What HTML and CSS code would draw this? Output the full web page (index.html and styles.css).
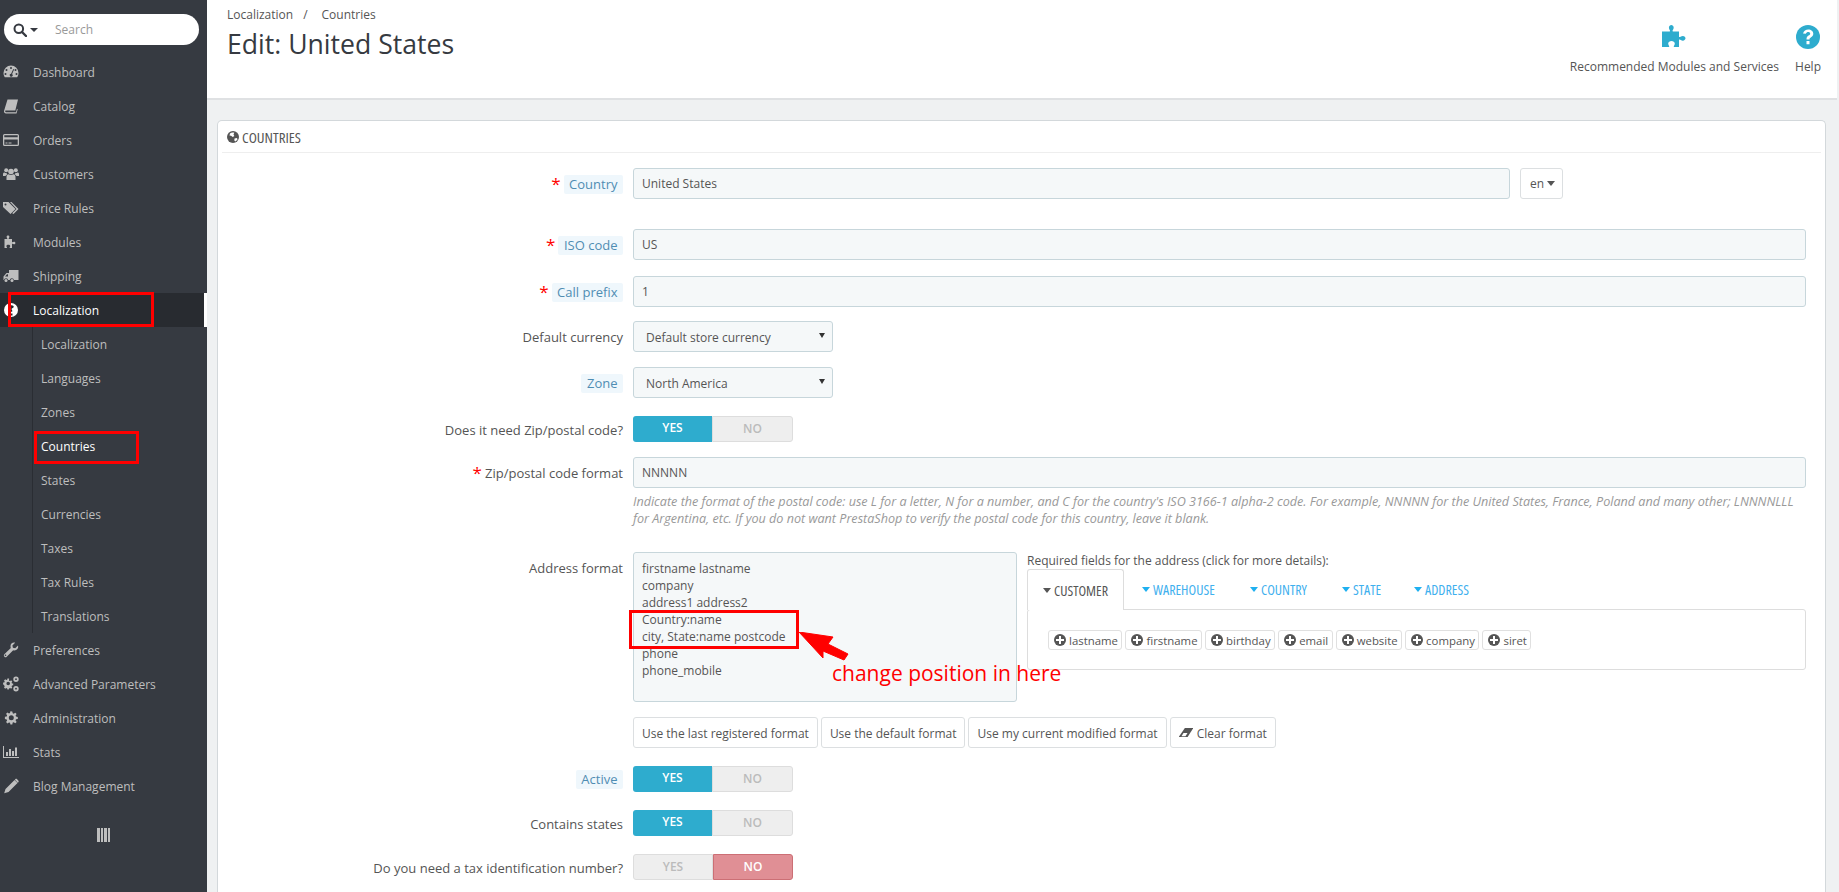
FILE: index.html
```html
<!DOCTYPE html>
<html lang="en">
<head>
<meta charset="utf-8">
<title>Edit: United States</title>
<link rel="stylesheet" href="styles.css">
</head>
<body>
<div class="shell">
  <aside class="sidebar">
    <div class="search">
      <svg class="s-ic" viewBox="0 0 14 14"><circle cx="5.8" cy="5.8" r="4.3" fill="none" stroke="#363a41" stroke-width="2"/><path d="M9 9l4 4" stroke="#363a41" stroke-width="2.4" stroke-linecap="round"/></svg>
      <svg class="s-caret" viewBox="0 0 8 4"><path d="M0 0h8L4 4z" fill="#363a41"/></svg>
      <span class="s-text">Search</span>
    </div>
    <nav class="nav">
      <a class="nav-item"><svg class="ic" viewBox="0 0 16 16"><path fill-rule="evenodd" d="M8 1.5A7.5 7.5 0 0 0 .5 9c0 1.6.5 3 1.3 4.3h12.4c.8-1.3 1.3-2.700 1.300-4.300A7.500 7.500 0 0 0 8 1.500zM8 3a1 1 0 1 1 0 2 1 1 0 0 1 0-2zM3.500 5a1 1 0 1 1 0 2 1 1 0 0 1 0-2zM12.500 5a1 1 0 1 1 0 2 1 1 0 0 1 0-2zM2.500 9a1 1 0 1 1 0 2 1 1 0 0 1 0-2zM13.500 9a1 1 0 1 1 0 2 1 1 0 0 1 0-2zM10.300 5l.8.400-2 4.600a1.500 1.500 0 1 1-1-.300z"/></svg><span>Dashboard</span></a>
      <a class="nav-item"><svg class="ic" viewBox="0 0 16 16"><path d="M4.500 1.500h10.500L12.300 12.500H3c-.8 0-.9.500-.8 1 .1.400.4.700 1 .700h9.800l1-3.500.7.500-1.200 4.300H3C1.700 15.500.8 14.500 1 13z"/></svg><span>Catalog</span></a>
      <a class="nav-item"><svg class="ic" viewBox="0 0 16 16"><path fill-rule="evenodd" d="M1.500 2h13A1.500 1.500 0 0 1 16 3.500v9a1.500 1.500 0 0 1-1.500 1.500h-13A1.500 1.500 0 0 1 0 12.500v-9A1.500 1.500 0 0 1 1.500 2zM1.300 3.300v1.900h13.400V3.300zM1.300 7.500v5.200h13.400V7.500zM2.500 10.500h2v1h-2zM5.500 10.500h3v1h-3z"/></svg><span>Orders</span></a>
      <a class="nav-item"><svg class="ic" viewBox="0 0 16 16"><circle cx="8" cy="5.500" r="2.800"/><circle cx="3.200" cy="4.300" r="2"/><circle cx="12.800" cy="4.300" r="2"/><path d="M3.500 14v-3c0-1.700 1-2.700 2.300-2.700.6.500 1.300.8 2.200.8s1.600-.3 2.200-.8c1.300 0 2.300 1 2.300 2.700v3zM0 10V8c0-1 .6-1.600 1.500-1.600.6.400 1.100.6 2 .6.100.6.500 1.200.9 1.600C3.300 9 2.800 9.500 2.600 10zM16 10V8c0-1-.6-1.600-1.500-1.600-.6.400-1.100.6-2 .6-.1.600-.5 1.200-.9 1.600 1.100.4 1.600.9 1.800 1.400z"/></svg><span>Customers</span></a>
      <a class="nav-item"><svg class="ic" viewBox="0 0 16 16"><path fill-rule="evenodd" d="M0 2h5.500l7 7-5 5-7.500-7zM2.500 3.500a1 1 0 1 0 0 2 1 1 0 0 0 0-2z"/><path d="M7 2h1.500l7 7-5 5-1.300-.8 4.300-4.200z"/></svg><span>Price Rules</span></a>
      <a class="nav-item"><svg class="ic" viewBox="0 0 16 16"><path d="M1.500 5H4.200c.5-.5-.6-1.200-.6-2.200C3.600 1.900 4.400 1.500 5 1.500s1.400.4 1.400 1.300c0 1-1.100 1.700-.6 2.200H9v3.200c.5.500 1.200-.5 2-.5 1 0 1.400.7 1.400 1.300s-.4 1.300-1.400 1.300c-.8 0-1.500-1-2-.5V14H6.700c-.500-.5.500-1 .5-1.800 0-.9-.9-1.400-1.900-1.400s-1.900.5-1.900 1.400c0 .8 1 1.300.5 1.800H1.500z"/></svg><span>Modules</span></a>
      <a class="nav-item"><svg class="ic" viewBox="0 0 16 16"><path fill-rule="evenodd" d="M6 2h9.500v10H11a2.200 2.200 0 0 0-4.300 0H5.200a2.200 2.200 0 0 0-4.300 0H.5V8.500L3.500 5H6zM4 6.200L2 8.500h3V6.200z"/><circle cx="3" cy="12.500" r="1.500"/><circle cx="9" cy="12.500" r="1.500"/></svg><span>Shipping</span></a>
      <a class="nav-item nav-active"><svg class="ic" viewBox="0 0 16 16"><circle cx="8" cy="8" r="7"/><path d="M5.500 4.500c1-1.500 4-1.800 5-.5.700 1-.3 2-1.300 2.300-.7.300-.7 1-.3 1.700l.4.700c.3.500-.2 1-.9 1H7.300c-.9 0-1-.9-.6-1.500.2-.5 0-1-.5-1.500C5.500 6.500 5 5.500 5.500 4.500zM7 11.500h2.500v2H7z" fill="#282b30"/></svg><span>Localization</span></a>
      <div class="sub">
        <a class="sub-item">Localization</a>
        <a class="sub-item">Languages</a>
        <a class="sub-item">Zones</a>
        <a class="sub-item sub-active">Countries</a>
        <a class="sub-item">States</a>
        <a class="sub-item">Currencies</a>
        <a class="sub-item">Taxes</a>
        <a class="sub-item">Tax Rules</a>
        <a class="sub-item">Translations</a>
      </div>
      <a class="nav-item"><svg class="ic" viewBox="0 0 16 16"><path fill-rule="evenodd" d="M15 3.500l-2.800 2.700-2.300-.5-.5-2.300L12.100.700C9.800 0 7.300 1.700 7.500 4.500c0 .5.100 1 .3 1.400L1.300 12.300a1.700 1.700 0 0 0 2.400 2.400l6.500-6.500c2.900.9 5.700-1.500 4.800-4.700zM2.500 12.500a.8.800 0 1 1 0 1.600.8.800 0 0 1 0-1.600z"/></svg><span>Preferences</span></a>
      <a class="nav-item"><svg class="ic" viewBox="0 0 16 16"><path fill-rule="evenodd" d="M5.500 3.500l1.200.3.900-.7 1.200 1.200-.7.900.4 1 1.200.2v1.700l-1.200.2-.4 1 .7 1-1.200 1.200-.9-.7-1.200.4-.2 1.200H3.900l-.2-1.200-1-.4-1 .7-1.200-1.200.7-1-.4-1L-.4 7.100V5.400l1.200-.2.400-1-.7-.9 1.200-1.200 1 .7 1-.3.200-1.200h1.700zM4.700 4.500a1.800 1.800 0 1 0 0 3.600 1.800 1.800 0 0 0 0-3.600z" transform="translate(.5 1.200)"/><path fill-rule="evenodd" d="M13 .5a2.700 2.700 0 1 0 0 5.400 2.700 2.700 0 0 0 0-5.400zM13 2.300a.9.900 0 1 1 0 1.800.9.900 0 0 1 0-1.800zM13 10a2.700 2.700 0 1 0 0 5.400 2.700 2.700 0 0 0 0-5.400zM13 11.800a.9.900 0 1 1 0 1.800.9.900 0 0 1 0-1.800z"/></svg><span>Advanced Parameters</span></a>
      <a class="nav-item"><svg class="ic" viewBox="0 0 16 16"><path fill-rule="evenodd" d="M9.300 1.500l.4 1.800 1 .4 1.600-1 1.300 1.300-1 1.600.4 1 1.800.4v1.900l-1.800.4-.4 1 1 1.600-1.300 1.300-1.600-1-1 .4-.4 1.800H7.400L7 12.800l-1-.4-1.600 1-1.300-1.300 1-1.600-.4-1-1.800-.4V6.800l1.800-.4.400-1-1-1.600 1.300-1.300 1.600 1 1-.4.400-1.800zM8.300 5.200a2.500 2.500 0 1 0 0 5 2.500 2.500 0 0 0 0-5z"/></svg><span>Administration</span></a>
      <a class="nav-item"><svg class="ic" viewBox="0 0 16 16"><path d="M0 2h1v11h15v1H0zM3 8h2v4H3zM6 5h2v7H6zM9 7h2v5H9zM12 3.500h2V12h-2z"/></svg><span>Stats</span></a>
      <a class="nav-item"><svg class="ic" viewBox="0 0 16 16"><path d="M11.500 2l3 3-9 9-4.300 1.300L2.500 11zM12.300 1.200c.5-.5 1.300-.5 1.800 0l1.200 1.200c.5.500.5 1.300 0 1.800l-.5.500-3-3z"/></svg><span>Blog Management</span></a>
    </nav>
    <div class="collapse"><i></i><i></i><i></i><i></i></div>
  </aside>
  <main class="main">
    <header class="top">
      <div class="head-left">
        <div class="crumbs"><span>Localization</span><span class="slash">/</span><span>Countries</span></div>
        <h1 class="title">Edit: United States</h1>
      </div>
      <div class="head-right">
        <a class="tool tool-rec"><svg class="t-puzzle" viewBox="0 0 27 25"><path fill="#2eacce" d="M1 8.500h7.800c1-.8-.9-2-.9-3.800C7.900 3 9.200 2 10.300 2s2.400 1 2.400 2.700c0 1.800-1.900 3-.9 3.800H18v5.300c.8 1 2-.9 3.800-.9 1.700 0 2.700 1.300 2.700 2.400s-1 2.400-2.700 2.400c-1.800 0-3-1.900-3.800-.9V24h-5c-1-.9.800-1.500.8-3.200 0-1.600-1.600-2.700-3.300-2.700s-3.300 1.100-3.300 2.700c0 1.700 1.800 2.300.8 3.200H1z"/></svg><span>Recommended Modules and Services</span></a>
        <a class="tool tool-help"><svg class="t-help" viewBox="0 0 24 24"><circle cx="12" cy="12" r="12" fill="#2eacce"/><path fill="#fff" d="M7 8.500C7.800 5.800 9.800 4.500 12.300 4.500c2.800 0 5 1.800 5 4.300 0 2-1.200 2.900-2.500 3.700-1 .6-1.300 1-1.300 2h-3c0-2 .6-3 2-3.900 1-.6 1.700-1 1.700-1.900 0-1-.9-1.600-1.900-1.600-1.200 0-1.900.7-2.500 1.700zM10.500 16h3v3.200h-3z"/></svg><span>Help</span></a>
      </div>
    </header>
    <section class="panel">
      <div class="panel-head"><svg class="p-globe" viewBox="0 0 12 12"><circle cx="6" cy="6" r="6" fill="#555"/><path fill="#fff" d="M3 2.500c1-1 3-1.300 4.300-.7L6.500 3.500l.8 1.500-1.500 1L4 4.800 2.500 4.500zM7.500 7.500l2.500-.5.500 1.500-2 2-1.200-1z"/></svg><span class="cond">COUNTRIES</span></div>
      <form class="form">
        <div class="row row-first">
          <div class="lab"><b class="star">*</b><span class="chip">Country</span></div>
          <div class="ctl ctl-line"><div class="input input-grow">United States</div><div class="lang">en<i class="caret"></i></div></div>
        </div>
        <div class="row row-iso">
          <div class="lab"><b class="star">*</b><span class="chip">ISO code</span></div>
          <div class="ctl"><div class="input">US</div></div>
        </div>
        <div class="row row-prefix">
          <div class="lab"><b class="star">*</b><span class="chip">Call prefix</span></div>
          <div class="ctl"><div class="input">1</div></div>
        </div>
        <div class="row row-tight">
          <div class="lab">Default currency</div>
          <div class="ctl"><div class="select">Default store currency<i class="sel-caret"></i></div></div>
        </div>
        <div class="row">
          <div class="lab"><span class="chip">Zone</span></div>
          <div class="ctl"><div class="select">North America<i class="sel-caret"></i></div></div>
        </div>
        <div class="row row-sw">
          <div class="lab lab-sw">Does it need Zip/postal code?</div>
          <div class="ctl"><div class="switch"><span class="on">YES</span><span class="off">NO</span></div></div>
        </div>
        <div class="row">
          <div class="lab"><b class="star">*</b>Zip/postal code format</div>
          <div class="ctl"><div class="input">NNNNN</div>
            <p class="help">Indicate the format of the postal code: use L for a letter, N for a number, and C for the country's ISO 3166-1 alpha-2 code. For example, NNNNN for the United States, France, Poland and many other; LNNNNLLL for Argentina, etc. If you do not want PrestaShop to verify the postal code for this country, leave it blank.</p>
          </div>
        </div>
        <div class="row row-addr">
          <div class="lab lab-top">Address format</div>
          <div class="ctl ctl-addr">
            <div class="textarea">firstname lastname<br>company<br>address1 address2<br>Country:name<br>city, State:name postcode<br>phone<br>phone_mobile</div>
            <div class="fields">
              <div class="fields-title">Required fields for the address (click for more details):</div>
              <div class="tabs">
                <div class="tab tab-active"><i class="caret caret-dark"></i><span>CUSTOMER</span></div>
                <div class="tab tab-wh"><i class="caret"></i><span>WAREHOUSE</span></div>
                <div class="tab tab-co"><i class="caret"></i><span>COUNTRY</span></div>
                <div class="tab tab-st"><i class="caret"></i><span>STATE</span></div>
                <div class="tab tab-ad"><i class="caret"></i><span>ADDRESS</span></div>
              </div>
              <div class="tab-body">
                <span class="tag"><i class="plus"></i>lastname</span>
                <span class="tag"><i class="plus"></i>firstname</span>
                <span class="tag"><i class="plus"></i>birthday</span>
                <span class="tag"><i class="plus"></i>email</span>
                <span class="tag"><i class="plus"></i>website</span>
                <span class="tag"><i class="plus"></i>company</span>
                <span class="tag"><i class="plus"></i>siret</span>
              </div>
            </div>
          </div>
        </div>
        <div class="row">
          <div class="lab"></div>
          <div class="ctl ctl-btns">
            <span class="btn">Use the last registered format</span>
            <span class="btn">Use the default format</span>
            <span class="btn">Use my current modified format</span>
            <span class="btn"><svg class="eraser" viewBox="0 0 14 12"><path fill="#555" d="M5 1h8.500l-4.500 9H0z" transform="skewX(-8) translate(1 0)"/><path fill="#fff" d="M2.500 9.300L4.500 6h4L6.500 9.300z"/></svg>Clear format</span>
          </div>
        </div>
        <div class="row row-sw">
          <div class="lab lab-sw"><span class="chip">Active</span></div>
          <div class="ctl"><div class="switch"><span class="on">YES</span><span class="off">NO</span></div></div>
        </div>
        <div class="row row-sw">
          <div class="lab lab-sw">Contains states</div>
          <div class="ctl"><div class="switch"><span class="on">YES</span><span class="off">NO</span></div></div>
        </div>
        <div class="row row-sw">
          <div class="lab lab-sw">Do you need a tax identification number?</div>
          <div class="ctl"><div class="switch switch-no"><span class="off">YES</span><span class="on-no">NO</span></div></div>
        </div>
      </form>
    </section>
  </main>
  <div class="mark mark-nav"></div>
  <div class="mark mark-sub"></div>
  <div class="mark mark-addr"></div>
  <svg class="arrow" viewBox="0 0 60 40"><path fill="#f00" d="M0 0L34 5 29 12 49 22 45 28 24 19 24 26z" stroke="#f00" stroke-width="1" stroke-linejoin="round"/></svg>
  <div class="note">change position in here</div>
</div>
</body>
</html>
```
FILE: styles.css
```css
* { box-sizing: border-box; }
html, body { margin: 0; padding: 0; height: 100%; }
body { font-family: "Open Sans", "Liberation Sans", sans-serif; font-size: 12px; color: #555; background: #eff1f2; overflow: hidden; }
.shell { position: relative; display: flex; width: 1839px; height: 892px; overflow: hidden; }

.sidebar { width: 207px; flex: none; background: #363a41; color: #bebebe; }
.search { display: flex; align-items: center; width: 195px; height: 31px; margin: 14px 0 10px 4px; background: #fff; border-radius: 16px; padding-left: 9px; }
.s-ic { width: 14px; height: 14px; }
.s-caret { width: 8px; height: 4px; margin-left: 3px; }
.s-text { margin-left: 17px; color: #999; }
.nav { display: block; }
.nav-item { display: flex; align-items: center; height: 34px; padding-left: 3px; color: #bebebe; }
.ic { width: 16px; height: 16px; margin-right: 14px; fill: #bebebe; flex: none; }
.nav-active { width: 207px; background: #282b30; border-right: 3px solid #fff; color: #fff; font-weight: 400; }
.nav-active .ic { fill: #fff; }
.sub { margin-left: 32px; border-left: 1px solid #2a2d33; }
.sub-item { display: flex; align-items: center; height: 34px; padding-left: 8px; color: #bebebe; }
.sub-active { color: #fff; }
.collapse { display: flex; gap: 1px; width: 13px; height: 14px; margin: 25px 0 0 97px; }
.collapse i { flex: 1; background: #bebebe; }

.main { width: 1630px; flex: none; display: flex; flex-direction: column; }
.top { display: flex; justify-content: space-between; height: 100px; background: #fff; border-bottom: 2px solid #dfe1e3; padding: 0 16px 0 20px; }
.crumbs { display: flex; margin-top: 7px; line-height: 16px; }
.slash { margin: 0 14px 0 10px; }
.title { margin: 3px 0 0 0; font-size: 26.6px; font-weight: 400; line-height: 36px; color: #363a41; }
.head-right { display: flex; gap: 16px; }
.tool { display: flex; flex-direction: column; align-items: center; height: 75px; justify-content: flex-end; line-height: 16px; }
.t-puzzle { width: 27px; height: 25px; margin-bottom: 11px; }
.t-help { width: 24px; height: 24px; margin-bottom: 10px; }

.panel { flex: 1; margin: 20px 11px 0 10px; background: #fff; border: 1px solid #d3d8db; border-bottom: 0; border-radius: 5px 5px 0 0; padding: 0 19px 0 0; position: relative; }
.panel-head { display: flex; align-items: center; height: 32px; margin: 0 -15px 0 4px; padding-left: 5px; border-bottom: 1px solid #eee; font-size: 15px; color: #555; }
.cond { font-stretch: condensed; }
.p-globe { width: 12px; height: 12px; margin-right: 3px; }
.form { display: block; }

.row { display: flex; margin-top: 15px; align-items: flex-start; }
.row-first { margin-top: 15px; }
.row-iso { margin-top: 30px; }
.row-prefix { margin-top: 16px; }
.row-tight { margin-top: 14px; }
.row-sw { margin-top: 18px; }
.row-addr { margin-top: 0; }
.lab { display: flex; align-items: center; justify-content: flex-end; width: 405px; height: 31px; margin-right: 10px; flex: none; color: #555; font-size: 13px; white-space: nowrap; padding-top: 1px; }
.lab-sw { height: 26px; }
.lab-top { height: 31px; align-items: flex-start; padding-top: 7px; }
.star { color: #f00; font-size: 17px; font-weight: 400; line-height: 17px; margin-right: 3px; position: relative; top: -1px; }
.chip { background: #eff7fc; color: #4f8db3; line-height: 19px; padding: 0 5.500px; border-radius: 2px; }
.ctl { flex: 1; min-width: 0; }
.ctl-line { display: flex; gap: 10px; }
.input { height: 31px; line-height: 30px; padding: 0 8px; background: #f5f8f9; border: 1px solid #c7d6db; border-radius: 3px; color: #555; }
.input-grow { flex: 1; }
.lang { display: flex; align-items: center; width: 43px; height: 31px; padding-left: 9px; border: 1px solid #dcdfe1; border-radius: 3px; gap: 3px; margin-right: 243px; }
.caret { display: inline-block; width: 0; height: 0; border-left: 4.500px solid transparent; border-right: 4.500px solid transparent; border-top: 5px solid #555; }
.select { position: relative; width: 200px; height: 31px; line-height: 31px; padding-left: 12px; background: #f5f8f9; border: 1px solid #c7d6db; border-radius: 3px; }
.sel-caret { position: absolute; right: 7px; top: 11px; width: 0; height: 0; border-left: 3px solid transparent; border-right: 3px solid transparent; border-top: 5px solid #333; }
.switch { display: flex; width: 160px; height: 26px; line-height: 24px; text-align: center; font-weight: 600; }
.switch span { flex: 1; }
.on { background: #2eacce; color: #fff; border-radius: 3px 0 0 3px; }
.off { background: #eee; color: #bbb; border: 1px solid #ddd; border-radius: 0 3px 3px 0; }
.switch-no .off { border-radius: 3px 0 0 3px; }
.on-no { background: #e08f95; border: 1px solid #cc6f75; color: #fff; border-radius: 0 3px 3px 0; }
.help { margin: 5px 0 0; font-style: italic; font-size: 12.6px; color: #999; line-height: 17px; height: 59px; }

.ctl-addr { display: flex; gap: 10px; }
.textarea { width: 384px; height: 150px; flex: none; padding: 7px 8px; line-height: 17px; background: #f5f8f9; border: 1px solid #c7d6db; border-radius: 3px; }
.fields { flex: 1; min-width: 0; }
.fields-title { line-height: 17px; }
.tabs { display: flex; height: 40px; }
.tab { display: flex; align-items: center; gap: 3px; padding-left: 18px; font-size: 14px; font-stretch: condensed; color: #3fb0ee; white-space: nowrap; }
.tab .caret { border-top-color: #1fb0f0; }
.tab-active { width: 97px; padding-left: 15px; background: #fff; color: #555; border: 1px solid #ddd; border-bottom: 0; border-radius: 3px 3px 0 0; position: relative; z-index: 1; height: 41px; }
.tab .caret-dark { border-top-color: #555; }
.tab-wh { width: 108px; }
.tab-co { width: 92px; }
.tab-st { width: 72px; }
.tab-ad { width: 90px; }
.tab-body { display: flex; gap: 3px; height: 61px; padding: 20px 0 0 20px; border: 1px solid #ddd; border-radius: 3px; position: relative; }
.tag { display: flex; align-items: center; height: 20px; padding: 0 3.500px 0 5px; background: #fff; border: 1px solid #e0e0e0; border-radius: 3px; gap: 3px; white-space: nowrap; font-size: 11.4px; }
.plus { position: relative; display: block; width: 12px; height: 12px; border-radius: 50%; background: #555; }
.plus::before { content: ""; position: absolute; left: 2px; top: 5px; width: 8px; height: 2px; background: #fff; }
.plus::after { content: ""; position: absolute; left: 5px; top: 2px; width: 2px; height: 8px; background: #fff; }
.ctl-btns { display: flex; gap: 3px; }
.btn { display: flex; align-items: center; height: 31px; padding: 1px 8px 0; background: #fff; border: 1px solid #dcdfe1; border-radius: 3px; white-space: nowrap; }
.eraser { width: 14px; height: 12px; margin-right: 4px; }

.mark { position: absolute; border: 3px solid #f00; pointer-events: none; }
.mark-nav { left: 8px; top: 292px; width: 146px; height: 35px; }
.mark-sub { left: 34px; top: 431px; width: 105px; height: 33px; }
.mark-addr { left: 629px; top: 610px; width: 170px; height: 39px; }
.arrow { position: absolute; left: 799px; top: 632px; width: 60px; height: 40px; }
.note { position: absolute; left: 832px; top: 659px; font-size: 21px; line-height: 28px; color: #f00; white-space: nowrap; }
```
